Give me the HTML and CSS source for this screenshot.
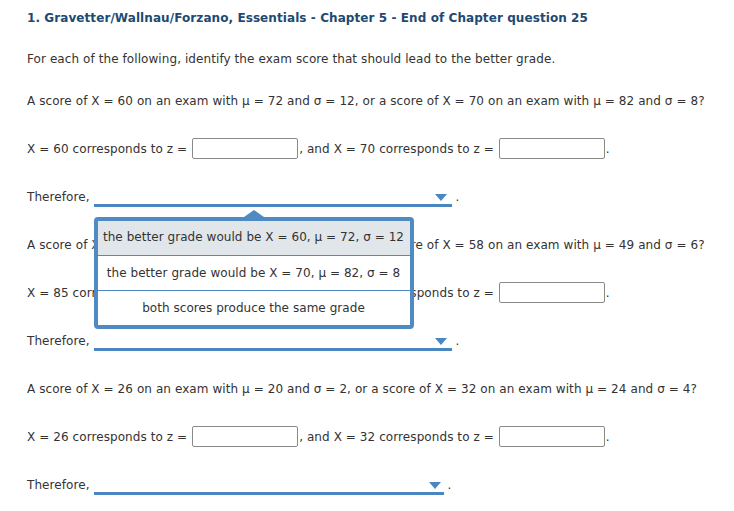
FILE: index.html
```html
<!doctype html>
<html>
  <head>
    <meta charset="utf-8">
    <title>Chapter 5 - End of Chapter question 25</title>
    <link rel="stylesheet" href="styles.css">
  </head>
  <body>
    <main class="question">
      <h1 class="title">1. Gravetter/Wallnau/Forzano, Essentials - Chapter 5 - End of Chapter question 25</h1>
      <p class="intro">For each of the following, identify the exam score that should lead to the better grade.</p>
      <div class="parts">
        <p>A score of X = 60 on an exam with μ = 72 and σ = 12, or a score of X = 70 on an exam with μ = 82 and σ = 8?</p>
        <p>X = 60 corresponds to z = <input type="text" class="answer">, and X = 70 corresponds to z = <input type="text" class="answer">.</p>
        <p>Therefore, <span class="select open"><span class="arrow"></span>
            <span class="menu">
              <span class="option active">the better grade would be X = 60, μ = 72, σ = 12</span>
              <span class="option">the better grade would be X = 70, μ = 82, σ = 8</span>
              <span class="option">both scores produce the same grade</span>
            </span>
          </span> .</p>
        <p>A score of X = 85 on an exam with μ = 70 and σ = 10, or a score of X = 58 on an exam with μ = 49 and σ = 6?</p>
        <p>X = 85 corresponds to z = <input type="text" class="answer">, and X = 58 corresponds to z = <input type="text" class="answer">.</p>
        <p>Therefore, <span class="select"><span class="arrow"></span></span> .</p>
        <p>A score of X = 26 on an exam with μ = 20 and σ = 2, or a score of X = 32 on an exam with μ = 24 and σ = 4?</p>
        <p>X = 26 corresponds to z = <input type="text" class="answer">, and X = 32 corresponds to z = <input type="text" class="answer">.</p>
        <p>Therefore, <span class="select short"><span class="arrow"></span></span> .</p>
      </div>
    </main>
  </body>
</html>
```
FILE: styles.css
```css
body {
  background: white;
  color: #333;
  font: 12px/20px "DejaVu Sans", Verdana, sans-serif;
  letter-spacing: 0.08px;
  margin: 0;
}
.question {
  padding: 8px 27px 0;
}
.title {
  color: #1d4a72;
  font-size: 12px;
  font-weight: bold;
  line-height: 20px;
  margin: 0 0 21px;
}
.intro {
  margin: 0 0 22px;
}
.parts {
  display: flex;
  flex-direction: column;
  gap: 28px;
}
.parts p {
  height: 20px;
  margin: 0;
  white-space: nowrap;
}
.answer {
  border: solid 1px #8a8a8a;
  border-radius: 2px;
  box-sizing: border-box;
  height: 21px;
  margin: -1px 1px 0;
  padding: 0 4px;
  vertical-align: top;
  width: 106px;
}
.select {
  align-items: flex-end;
  border-bottom: solid 3px #4a87c0;
  box-sizing: border-box;
  display: inline-flex;
  height: 20px;
  justify-content: flex-end;
  padding: 0 5px 3px 0;
  position: relative;
  vertical-align: top;
  width: 358px;
}
.select.short {
  width: 350px;
  padding-right: 3px;
}
.arrow {
  border-left: solid 6px transparent;
  border-right: solid 6px transparent;
  border-top: solid 7px #4a87c0;
  height: 0;
  width: 0;
}
/* open dropdown, lies over the rows below */
.menu {
  background: white;
  border: solid 4px #4f8ac3;
  border-radius: 4px;
  box-sizing: border-box;
  display: flex;
  flex-direction: column;
  left: 0;
  letter-spacing: 0.05px;
  position: absolute;
  top: 30px;
  width: 320px;
  z-index: 2;
}
.menu::before {
  border-bottom: solid 7px #4f8ac3;
  border-left: solid 10px transparent;
  border-right: solid 10px transparent;
  content: "";
  left: 146px;
  position: absolute;
  top: -11px;
}
.option {
  border-top: solid 1px #4f8ac3;
  height: 34px;
  line-height: 34px;
  text-align: center;
}
.option:first-child {
  border-top: none;
}
.option.active {
  background: #e1e6eb;
  line-height: 32px;
}
```
